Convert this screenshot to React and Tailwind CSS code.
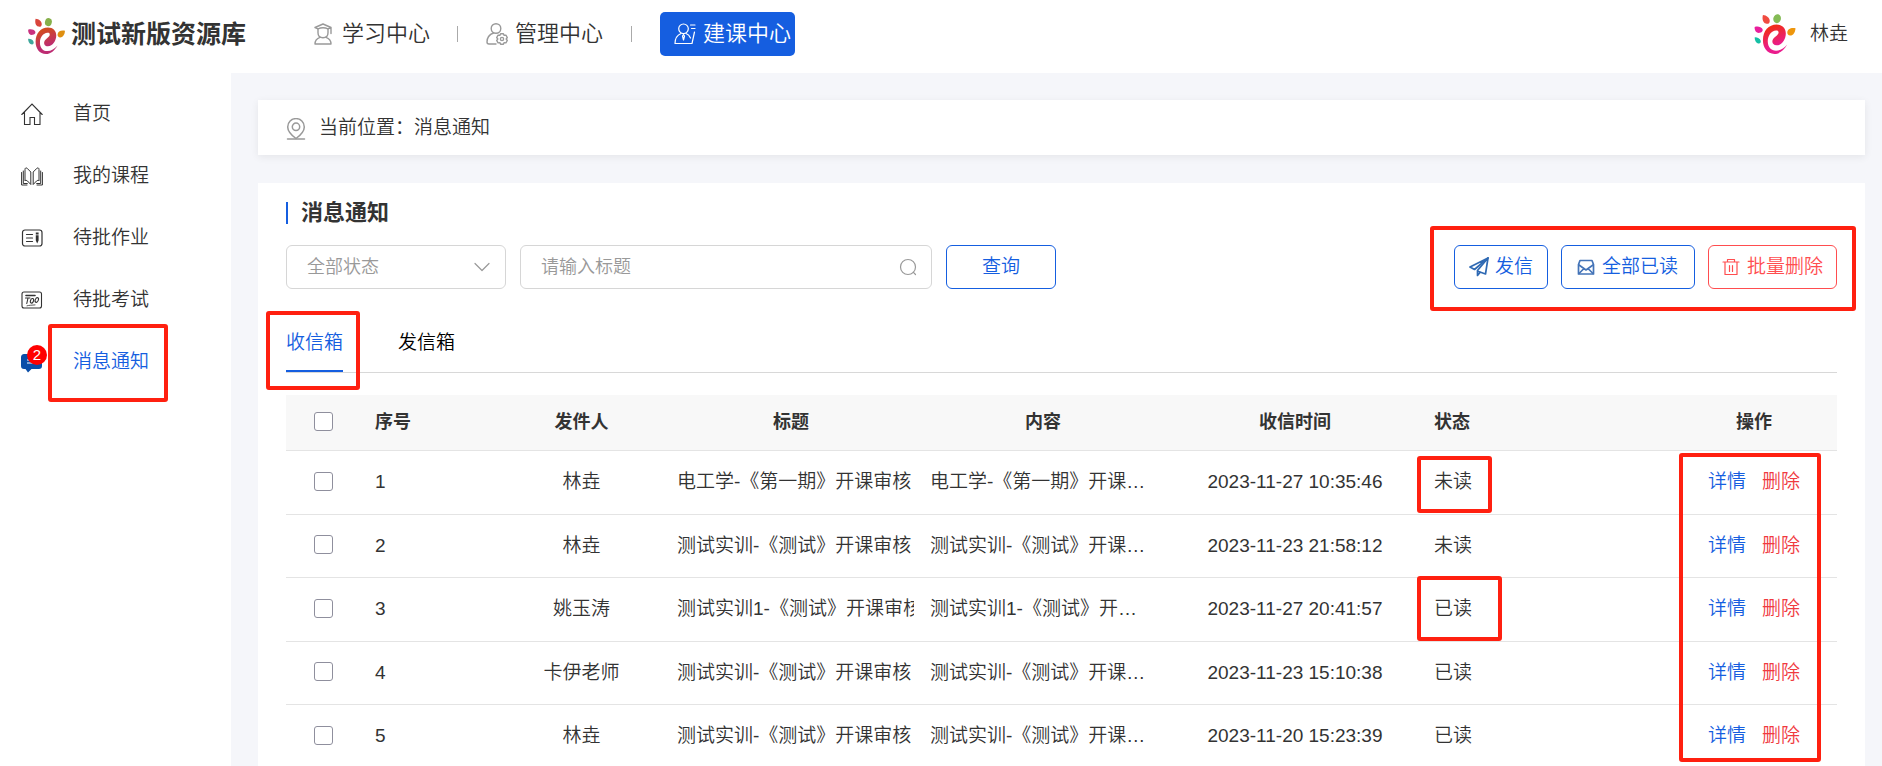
import React from "react";

const marks = "pointer-events-none absolute rounded-[3px] border-4 border-[#ff2010]";

function Mark({ className }) {
  return <span aria-hidden="true" className={marks + " " + className} />;
}

function Stroke({ children, className, viewBox = "0 0 22 22", width = 1.2 }) {
  return (
    <svg viewBox={viewBox} className={className} fill="none" stroke="currentColor" strokeWidth={width} strokeLinejoin="round" strokeLinecap="round" aria-hidden="true">
      {children}
    </svg>
  );
}

function Logo({ className, from, to, petals }) {
  const id = "swirl" + from.slice(1);
  return (
    <svg viewBox="0 0 40 38" className={className} aria-hidden="true">
      <defs>
        <linearGradient id={id} x1="0" y1="0" x2="0.3" y2="1">
          <stop offset="0.2" stopColor={from} />
          <stop offset="0.8" stopColor={to} />
        </linearGradient>
      </defs>
      <path
        fill={`url(#${id})`}
        d="M31.700 29C28 35 24 38 19.500 38 12.500 38 8.500 32 8.500 25 8.500 16 14 10 21.500 10c5.500 0 8.800 3.500 8.800 8.500 0 5.500-3.800 11.300-8.800 11.300-3.200 0-4.400-2.300-3.900-4.500.4-1.900 2-3 3.600-4.400 1.200-1.100 2.300-2.300 2.200-3.600-.1-1.200-1-1.700-2.400-1.600-4.500.3-7.900 4.800-7.900 10.300 0 5.700 3.300 8.900 7.900 8.900 4 0 7.500-2.300 10.700-5.900z"
      />
      <path fill={petals[0]} d="M8.500.8c3.500.2 6.600 2.700 6.500 5.700 0 2.200-1.600 3.200-3.600 2.600C8.500 8.300 7.500 4.500 8.500.8z" />
      <ellipse fill={petals[1]} cx="22" cy="4.400" rx="3.600" ry="4.300" transform="rotate(15 22 4.400)" />
      <path fill={petals[2]} d="M.6 12.300c2.700-1 6.300-.4 7.500 2 .7 1.700-.3 3-2.400 3.500-2.700.7-5.300-1.100-5.100-5.500z" />
      <path fill={petals[3]} d="M.7 22c2.500-.1 5.100 1 5.700 3.400.3 1.500-.4 2.600-1.700 2.600C2.300 28 .5 25.400.7 22z" />
      <path fill={petals[4]} d="M39.500 13.500c-.2 4-2.300 7-5 7-1.900 0-2.900-1.500-2.800-3.200.2-2.800 3.400-4.800 7.800-3.800z" />
    </svg>
  );
}

function GraduateIcon() {
  return (
    <Stroke className="size-[22px] text-[#999]" width={1.4}>
      <path d="M3 4.500 11 1l8 3.500-3 1.300M3 4.500l3 1.300M19 4.500v6" />
      <path d="M6 5.800c3-1.300 7-1.300 10 0v4c0 3-2 5-5 5s-5-2-5-5z" />
      <path d="M8 14.300c-3 1-5 3-5 6.700h16c0-3.700-2-5.700-5-6.700" />
    </Stroke>
  );
}

function ManagerIcon() {
  return (
    <Stroke className="size-[22px] text-[#999]" width={1.4}>
      <circle cx="10" cy="5.500" r="4.800" />
      <path d="M7.500 10C3.500 11.500 1 15 1 19c0 1.300.6 2 2 2h7" />
      <circle cx="16" cy="16" r="1.600" />
      <path d="m14.600 10.800 2.800 0 .6 1.500 1.900-.2 1.400 2.400-1.100 1.500 1.100 1.500-1.400 2.400-1.900-.2-.6 1.500h-2.800l-.6-1.500-1.900.2-1.400-2.400 1.100-1.500-1.100-1.500 1.400-2.400 1.900.2z" />
    </Stroke>
  );
}

function TeacherIcon() {
  return (
    <Stroke className="size-[22px] text-white" width={1.2}>
      <circle cx="9.500" cy="5.800" r="4.800" />
      <path d="M7 10.500C3.500 12 1 15.500 1 20.500h17l2.500-11.500M12 10.500c2 .8 3.600 2.400 4.500 4.500" />
      <path d="M9.500 11.500 8.500 13l1 4 1-4z" />
      <path d="M16.500 2H21M17.500 5.500H21" />
    </Stroke>
  );
}

function HomeIcon() {
  return (
    <Stroke className="size-[22px]" width={1.1}>
      <path d="M.8 11.500 11 1l10.200 10.500M3.500 9.500v12h5.500v-7h4.500v7H19v-12" strokeLinejoin="miter" />
    </Stroke>
  );
}

function BooksIcon() {
  return (
    <Stroke className="size-[22px]" width={1}>
      <path d="M4 15.500V4.500C4 3 5 2.500 6 3.200L9.800 7v12.500L6.500 16c-.8-.8-2.500-1-2.500-.5zM18 15.500V4.500c0-1.500-1-2-2-1.300L12.200 7v12.500l3.300-3.500c.8-.8 2.500-1 2.500-.5z" />
      <path d="M2.300 6v12.500h4M.6 7.500V20H6M19.700 6v12.500h-4M21.400 7.500V20H16" />
    </Stroke>
  );
}

function HomeworkIcon() {
  return (
    <Stroke className="size-[22px]">
      <rect x="1.500" y="3" width="19.500" height="16" rx="2.500" />
      <path d="M5.500 7.500h6M5.500 11h6M5.500 14.500h6" />
      <path d="M14.800 5.500h2.800v2h-2.800zM14.800 8.300h2.800v5.200l-1.400 3-1.400-3z" fill="currentColor" stroke="none" />
    </Stroke>
  );
}

function ExamIcon() {
  return (
    <Stroke className="size-[22px]" width={1.1}>
      <rect x="1" y="3" width="19.500" height="16" rx="2" />
      <path d="M5 6.500h9" strokeWidth="1.600" />
      <path d="M4.500 9h4.500M7 9l-1.200 5.500" />
      <ellipse cx="11" cy="11.800" rx="1.500" ry="2.400" transform="rotate(20 11 11.800)" />
      <ellipse cx="15.800" cy="11" rx="1.500" ry="2.400" transform="rotate(25 15.800 11)" />
      <path d="M6 16.800c2-.6 5-.6 8-.9" strokeWidth="0.8" />
    </Stroke>
  );
}

function MessageIcon() {
  return (
    <svg viewBox="0 0 22 22" className="size-[22px]" aria-hidden="true">
      <path fill="#0b4ea8" d="M3.500 3H18a3 3 0 0 1 3 3v9a3 3 0 0 1-3 3h-7.500L7 21.500 4.500 18H3a3 3 0 0 1-3-3V6a3 3 0 0 1 3.500-3z" />
      <path stroke="#fff" strokeWidth="1.200" d="M6 9h8M6 12h6" />
    </svg>
  );
}

function PinIcon() {
  return (
    <Stroke className="size-[22px] text-[#999]" width={1.5}>
      <path d="M11 20.500C7 17.500 2.700 13.500 2.700 8.900a8.300 8.300 0 0 1 16.600 0c0 4.600-4.300 8.600-8.300 11.600z" />
      <circle cx="11" cy="8.800" r="3.700" />
      <path d="M2.500 21h17" />
    </Stroke>
  );
}

function PlaneIcon() {
  return (
    <Stroke className="size-5 text-[#2f69b3]" viewBox="0 0 20 20" width={1.7}>
      <path d="M19 1 1 10l4.500 2.500L19 1l-2.500 16-7-2.500" />
      <path d="M19 1 8.500 13.500v5L11 15.500" />
    </Stroke>
  );
}

function MailIcon() {
  return (
    <Stroke className="size-5 text-[#4474b8]" viewBox="0 0 20 20" width={1.7}>
      <path d="M4 3.500h12l1.500 4v9.500h-15V7.500z" />
      <path d="m3 8 7 5 7-5M3 16.500l5-5M17 16.500l-5-5" />
    </Stroke>
  );
}

function TrashIcon() {
  return (
    <Stroke className="size-[18px]" viewBox="0 0 18 18" width={1.2}>
      <path d="M1 4h16M5.500 4V1.500h7V4M3 4v12.500h12V4M7.500 7.500v6M10.500 7.500v6" />
    </Stroke>
  );
}

const sideItems = [
  { label: "首页", Icon: HomeIcon },
  { label: "我的课程", Icon: BooksIcon },
  { label: "待批作业", Icon: HomeworkIcon },
  { label: "待批考试", Icon: ExamIcon },
  { label: "消息通知", Icon: MessageIcon, active: true, badge: 2 },
];

const rows = [
  { sender: "林垚", title: "电工学-《第一期》开课审核", time: "2023-11-27 10:35:46", status: "未读" },
  { sender: "林垚", title: "测试实训-《测试》开课审核", time: "2023-11-23 21:58:12", status: "未读" },
  { sender: "姚玉涛", title: "测试实训1-《测试》开课审核", time: "2023-11-27 20:41:57", status: "已读" },
  { sender: "卡伊老师", title: "测试实训-《测试》开课审核", time: "2023-11-23 15:10:38", status: "已读" },
  { sender: "林垚", title: "测试实训-《测试》开课审核", time: "2023-11-20 15:23:39", status: "已读" },
];

const check = "block size-[19px] appearance-none rounded-[3px] border border-[#8f8f9d] bg-white checked:bg-[#155ee0]";
const outline = "flex h-11 items-center rounded-md border bg-white";

function Header() {
  return (
    <header className="flex h-[73px] shrink-0 items-center bg-white pb-[6px] pl-[27px] pr-[34px]">
      <a href="#home" className="flex items-center gap-[5px] text-[25px] font-bold leading-9">
        <Logo className="mt-1 h-9 w-[39px]" from="#d04a22" to="#bd2c72" petals={["#d9453b", "#86b04a", "#c9317f", "#3fa79c", "#df8f10"]} />
        测试新版资源库
      </a>
      <nav className="ml-[54px] flex items-center text-[22px] leading-8">
        <a href="#study" className="flex items-center gap-2 px-3">
          <GraduateIcon />
          学习中心
        </a>
        <span className="ml-[15px] h-4 w-px bg-[#aaa]" />
        <a href="#manage" className="ml-4 flex items-center gap-[7px] px-3">
          <ManagerIcon />
          管理中心
        </a>
        <span className="ml-4 h-4 w-px bg-[#aaa]" />
        <a href="#build" className="ml-7 flex h-11 items-center gap-[7px] rounded-[5px] bg-[#155ee0] pl-[14px] pr-1 text-white">
          <TeacherIcon />
          建课中心
        </a>
      </nav>
      <a href="#user" className="ml-auto flex items-center gap-[14px] text-[19px] leading-7">
        <Logo className="h-10 w-[42px]" from="#f02d1c" to="#ea1c8c" petals={["#f04b40", "#84bb55", "#e91e9c", "#15bfa5", "#ee960c"]} />
        林垚
      </a>
    </header>
  );
}

function Sidebar() {
  return (
    <aside className="w-[231px] shrink-0 bg-white pt-[10px]">
      <ul>
        {sideItems.map(({ label, Icon, active, badge }) => (
          <li key={label}>
            <a href="#side" className={"flex h-[62px] items-center gap-[30px] pl-[21px] text-[19px] " + (active ? "text-[#155ee0]" : "")}>
              <span className="relative">
                <Icon />
                {badge && (
                  <span className="absolute -top-[6px] left-[6px] flex size-5 items-center justify-center rounded-full bg-[#f00] text-[15px] text-white">{badge}</span>
                )}
              </span>
              <span className="relative">
                {label}
                {active && <Mark className="-bottom-[26px] -left-[25px] -right-[19px] -top-6" />}
              </span>
            </a>
          </li>
        ))}
      </ul>
    </aside>
  );
}

function Toolbar() {
  return (
    <div className="mt-[17px] flex items-center">
      <div className="relative w-[220px]">
        <select aria-label="状态" className="h-11 w-full appearance-none rounded-md border border-[#d6d6d6] bg-white pl-5 text-[18px] text-[#999]">
          <option>全部状态</option>
        </select>
        <Stroke className="pointer-events-none absolute right-4 top-[14px] size-4 text-[#999]" viewBox="0 0 16 16">
          <path d="m1 4.500 7 7 7-7" />
        </Stroke>
      </div>
      <div className="relative ml-[14px] w-[412px]">
        <input aria-label="标题" placeholder="请输入标题" className="h-11 w-full rounded-md border border-[#d6d6d6] bg-white pl-5 pr-12 text-[18px] placeholder:text-[#999]" />
        <Stroke className="pointer-events-none absolute right-[15px] top-[13px] size-[18px] text-[#999]" viewBox="0 0 18 18">
          <circle cx="9" cy="9" r="7.500" />
          <path d="m14.200 14.200 2.300 2.300" />
        </Stroke>
      </div>
      <button className={outline + " ml-[14px] w-[110px] justify-center border-[#155ee0] text-[19px] text-[#155ee0]"}>查询</button>
      <div className="relative ml-auto flex gap-[13px] text-[19px] text-[#155ee0]">
        <button className={outline + " gap-[6px] border-[#155ee0] px-[14px]"}>
          <PlaneIcon />
          发信
        </button>
        <button className={outline + " gap-[6px] border-[#155ee0] pl-[14px] pr-4"}>
          <MailIcon />
          全部已读
        </button>
        <button className={outline + " gap-[7px] border-[#ff4d4f] px-[13px] text-[#ff4d4f]"}>
          <TrashIcon />
          批量删除
        </button>
        <Mark className="-bottom-[22px] -left-6 -right-[19px] -top-[19px]" />
      </div>
    </div>
  );
}

function Tabs() {
  return (
    <div role="tablist" className="mt-[25px] flex gap-[55px] border-b border-[#d8d8d8] text-[19px] text-black">
      <button role="tab" aria-selected="true" className="relative h-[58px] border-b-2 border-[#155ee0] pt-[2px] text-[#155ee0]">
        收信箱
        <Mark className="-bottom-5 -left-5 -right-[17px] -top-[3px]" />
      </button>
      <button role="tab" aria-selected="false" className="h-[58px] border-b-2 border-transparent pt-[2px]">
        发信箱
      </button>
    </div>
  );
}

function Messages() {
  return (
    <table className="mt-[22px] w-full table-fixed text-[19px] leading-7">
      <colgroup>
        <col className="w-[76px]" />
        <col className="w-[136px]" />
        <col className="w-[167px]" />
        <col className="w-[252px]" />
        <col className="w-[252px]" />
        <col className="w-[252px]" />
        <col className="w-[248px]" />
        <col className="w-[168px]" />
      </colgroup>
      <thead>
        <tr className="h-[55px] border-b border-[#e4e4e4] bg-[#f8f8f8] text-[18px]">
          <th className="pb-[2px] pl-7"><input type="checkbox" aria-label="全选" className={check} /></th>
          <th className="pl-[13px] text-left">序号</th>
          <th>发件人</th>
          <th>标题</th>
          <th>内容</th>
          <th>收信时间</th>
          <th className="pl-[13px] text-left">状态</th>
          <th className="pl-[2px]">操作</th>
        </tr>
      </thead>
      <tbody>
        {rows.map((row, i) => (
          <tr key={i} className="border-b border-[#e4e4e4] odd:h-16 even:h-[63px]">
            <td className="pb-[2px] pl-7"><input type="checkbox" aria-label={"选择 " + (i + 1)} className={check} /></td>
            <td className="pl-[13px]">{i + 1}</td>
            <td className="text-center">{row.sender}</td>
            <td className="pl-3 pr-[3px]"><div className="overflow-hidden whitespace-nowrap">{row.title}</div></td>
            <td className="pl-[13px] pr-[18px]"><div className="truncate">{row.title}</div></td>
            <td className="text-center">{row.time}</td>
            <td className="pl-[13px]">
              <span className="relative inline-block">
                {row.status}
                {i === 0 && <Mark className="-bottom-[17px] -left-[17px] -right-5 -top-3" />}
                {i === 2 && <Mark className="-bottom-[18px] -left-[17px] -right-[30px] -top-[19px]" />}
              </span>
            </td>
            <td>
              <div className="relative flex justify-center gap-4 pl-[2px]">
                <a href="#detail" className="text-[#155ee0]">详情</a>
                <button className="text-[#f03a3f]">删除</button>
                {i === 0 && <Mark className="-top-[15px] left-[10px] right-4 h-[309px]" />}
              </div>
            </td>
          </tr>
        ))}
      </tbody>
    </table>
  );
}

export default function App() {
  return (
    <div className="flex min-h-screen flex-col bg-[#f5f6fa] font-['Liberation_Sans','Noto_Sans_CJK_SC',sans-serif] font-[350] text-[#333]">
      <Header />
      <div className="flex grow">
        <Sidebar />
        <main className="flex min-w-0 grow flex-col pl-[27px] pr-[17px] pt-[27px]">
          <div className="flex h-[55px] items-center gap-3 bg-white pl-[27px] pt-[2px] text-[19px] shadow-[0_2px_8px_rgba(0,0,0,0.07)]">
            <PinIcon />
            <span>当前位置：消息通知</span>
          </div>
          <section className="mt-7 grow bg-white px-7 pt-[15px]">
            <h1 className="flex items-center gap-[13px] text-[22px] font-bold leading-[30px]">
              <span className="h-[22px] w-[2px] bg-[#155ee0]" />
              消息通知
            </h1>
            <Toolbar />
            <Tabs />
            <Messages />
          </section>
        </main>
      </div>
    </div>
  );
}
